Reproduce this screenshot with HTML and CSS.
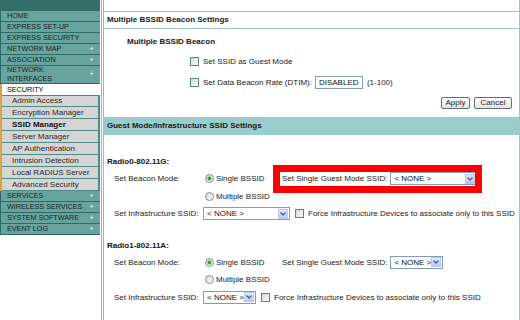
FILE: index.html
```html
<!DOCTYPE html>
<html>
    <head>
        <meta charset="utf-8">
        <title>SSID Manager</title>
        <link rel="stylesheet" href="styles.css">
    </head>
    <body>
        <div class="page">
            <nav class="menu">
                <div class="menu__top"></div>
                <div class="menu__item">HOME</div>
                <div class="menu__item">EXPRESS SET-UP</div>
                <div class="menu__item">EXPRESS SECURITY</div>
                <div class="menu__item">NETWORK MAP <span class="menu__plus">+</span></div>
                <div class="menu__item">ASSOCIATION <span class="menu__plus">+</span></div>
                <div class="menu__item menu__item--tall"><span>NETWORK<br>INTERFACES</span> <span class="menu__plus">+</span></div>
                <div class="menu__item menu__item--current">SECURITY</div>
                <ul class="submenu">
                    <li>Admin Access</li>
                    <li>Encryption Manager</li>
                    <li class="submenu__active">SSID Manager</li>
                    <li>Server Manager</li>
                    <li>AP Authentication</li>
                    <li>Intrusion Detection</li>
                    <li>Local RADIUS Server</li>
                    <li>Advanced Security</li>
                </ul>
                <div class="menu__item">SERVICES <span class="menu__plus">+</span></div>
                <div class="menu__item">WIRELESS SERVICES <span class="menu__plus">+</span></div>
                <div class="menu__item">SYSTEM SOFTWARE <span class="menu__plus">+</span></div>
                <div class="menu__item">EVENT LOG <span class="menu__plus">+</span></div>
            </nav>

            <main class="content">
                <h3 class="title">Multiple BSSID Beacon Settings</h3>
                <div class="beacon">
                    <h4 class="beacon__name">Multiple BSSID Beacon</h4>
                    <label class="beacon__row"><input type="checkbox" class="check"> Set SSID as Guest Mode</label>
                    <label class="beacon__row"><input type="checkbox" class="check"> Set Data Beacon Rate (DTIM): <span class="textbox">DISABLED</span> (1-100)</label>
                    <div class="actions">
                        <button class="btn btn--apply">Apply</button>
                        <button class="btn btn--cancel">Cancel</button>
                    </div>
                </div>

                <h3 class="band">Guest Mode/Infrastructure SSID Settings</h3>

                <section class="radio">
                    <h4 class="radio__name">Radio0-802.11G:</h4>
                    <div class="radio__grid">
                        <span class="lbl">Set Beacon Mode:</span>
                        <label class="opt"><input type="radio" name="r0" class="dot" checked>Single BSSID</label>
                        <div class="guest">
                            Set Single Guest Mode SSID:
                            <div class="select select--wide"><span class="select__value">&lt; NONE &gt;</span><span class="select__arrow"><svg width="6" height="4" viewBox="0 0 6 4"><polyline points="0.5,0.5 3,3 5.5,0.5" fill="none" stroke="#4d6185" stroke-width="1.3"/></svg></span></div>
                            <span class="guest__mark"></span>
                        </div>
                        <label class="opt opt--row2"><input type="radio" name="r0" class="dot">Multiple BSSID</label>
                        <span class="lbl">Set Infrastructure SSID:</span>
                        <div class="infra">
                            <div class="select select--wide"><span class="select__value">&lt; NONE &gt;</span><span class="select__arrow"><svg width="6" height="4" viewBox="0 0 6 4"><polyline points="0.5,0.5 3,3 5.5,0.5" fill="none" stroke="#4d6185" stroke-width="1.3"/></svg></span></div>
                            <input type="checkbox" class="check">
                            <span>Force Infrastructure Devices to associate only to this SSID</span>
                        </div>
                    </div>
                </section>

                <section class="radio radio--next">
                    <h4 class="radio__name">Radio1-802.11A:</h4>
                    <div class="radio__grid">
                        <span class="lbl">Set Beacon Mode:</span>
                        <label class="opt"><input type="radio" name="r1" class="dot" checked>Single BSSID</label>
                        <div class="guest">
                            Set Single Guest Mode SSID:
                            <div class="select select--narrow"><span class="select__value">&lt; NONE &gt;</span><span class="select__arrow"><svg width="6" height="4" viewBox="0 0 6 4"><polyline points="0.5,0.5 3,3 5.5,0.5" fill="none" stroke="#4d6185" stroke-width="1.3"/></svg></span></div>
                        </div>
                        <label class="opt opt--row2"><input type="radio" name="r1" class="dot">Multiple BSSID</label>
                        <span class="lbl">Set Infrastructure SSID:</span>
                        <div class="infra">
                            <div class="select select--narrow"><span class="select__value">&lt; NONE &gt;</span><span class="select__arrow"><svg width="6" height="4" viewBox="0 0 6 4"><polyline points="0.5,0.5 3,3 5.5,0.5" fill="none" stroke="#4d6185" stroke-width="1.3"/></svg></span></div>
                            <input type="checkbox" class="check">
                            <span>Force Infrastructure Devices to associate only to this SSID</span>
                        </div>
                    </div>
                </section>
            </main>
        </div>
    </body>
</html>
```

FILE: styles.css
```css
:root {
    --font-main: 'Liberation Sans', Arial, Helvetica, sans-serif;

    --color-menu: #68a39e;
    --color-menu-dark: #2f6b66;
    --color-sub: #d5d5d5;
    --color-sub-line: #4f8b86;
    --color-accent: #d9a441;
    --color-line: #9bc8c8;
    --color-band: #99cccc;
    --color-field: #7f9db9;
    --color-mark: #ff0000;
}
* {
    box-sizing: border-box;
}
body {
    margin: 0;
    font-family: var(--font-main);
    font-size: 8px;
    color: #222;
    background: #fff;
}
h3, h4 {
    margin: 0;
    font-size: 8px;
}
.page {
    display: flex;
    width: 520px;
    height: 320px;
}

/* left menu */
.menu {
    width: 100px;
    flex: none;
}
.menu__top {
    height: 11px;
    background: #336f6a;
}
.menu__item {
    display: flex;
    justify-content: space-between;
    align-items: center;
    height: 11px;
    padding: 0 6px 0 6px;
    background: var(--color-menu);
    border-bottom: 1px solid var(--color-menu-dark);
    border-left: 1px solid var(--color-menu-dark);
    font-size: 7.2px;
    line-height: 10px;
    color: #132826;
}
.menu__item--tall {
    height: 18px;
    line-height: 8.5px;
}
.menu__item--current {
    background: #fff;
    color: #000;
    border-left: 2px solid var(--color-accent);
    padding-left: 5px;
    border-bottom: 0;
}
.menu__plus {
    color: #e3f1ef;
    font-size: 8px;
}
.submenu {
    list-style: none;
    margin: 0;
    padding: 0;
    background: var(--color-sub);
    border-left: 2px solid var(--color-accent);
    border-right: 2px solid var(--color-sub-line);
}
.submenu li {
    height: 12px;
    line-height: 11px;
    padding-left: 10px;
    border-bottom: 1px solid var(--color-sub-line);
    color: #2a2a2a;
}
.submenu li:first-child {
    border-top: 1px solid var(--color-sub-line);
    line-height: 10px;
}
.submenu .submenu__active {
    font-weight: bold;
    color: #111;
}

/* main content */
.content {
    flex: 1;
    margin-left: 1px;
    padding-top: 11px;
    border-left: 3px double #8dbdbd;
    border-right: 1px solid var(--color-line);
}
.title {
    height: 18px;
    line-height: 16px;
    padding-left: 3px;
    border-top: 1px solid var(--color-line);
    border-bottom: 1px solid var(--color-line);
    color: #1a1a1a;
}
.beacon {
    padding: 6px 7px 0 23px;
}
.beacon__name {
    line-height: 14px;
    color: #1a1a1a;
}
.beacon__row {
    display: flex;
    align-items: center;
    gap: 4px;
    height: 21px;
    margin-left: 63px;
}
.beacon__row:first-of-type {
    margin-top: 2px;
}
.textbox {
    display: inline-flex;
    align-items: center;
    width: 48px;
    height: 13px;
    padding-left: 3px;
    margin-left: -1px;
    border: 1px solid var(--color-field);
    color: #111;
}
.actions {
    display: flex;
    justify-content: flex-end;
    gap: 4px;
    margin-top: 4px;
}
.btn {
    height: 12px;
    padding: 0;
    font-family: var(--font-main);
    font-size: 8px;
    line-height: 10px;
    color: #222;
    border: 1px solid #5d6f80;
    border-radius: 2px;
    background: linear-gradient(#ffffff, #e4e4de);
}
.btn--apply {
    width: 29px;
}
.btn--cancel {
    width: 38px;
}
.band {
    margin-top: 8px;
    height: 18px;
    line-height: 18px;
    padding-left: 3px;
    background: var(--color-band);
    color: #1a1a1a;
}

/* radio sections */
.radio {
    padding: 18px 0 0 3px;
}
.radio--next {
    padding-top: 14px;
}
.radio__name {
    line-height: 17px;
    color: #111;
}
.radio__grid {
    display: grid;
    grid-template-columns: 89px 79px auto;
    grid-auto-rows: 17.5px;
    align-items: center;
    margin-left: 7px;
}
.radio__grid .lbl {
    grid-column: 1;
}
.opt {
    display: flex;
    align-items: center;
    gap: 2px;
    padding-left: 2px;
}
.opt--row2 {
    grid-column: 2;
}
.guest {
    position: relative;
    display: flex;
    align-items: center;
    gap: 3px;
}
.guest__mark {
    position: absolute;
    left: -9px;
    top: -7px;
    width: 209px;
    height: 28px;
    border: 7px solid var(--color-mark);
}
.infra {
    grid-column: 2 / span 2;
    display: flex;
    align-items: center;
    gap: 4px;
}
.infra .select {
    margin-right: 1px;
}

/* form widgets */
.check,
.dot {
    -webkit-appearance: none;
    appearance: none;
    flex: none;
    width: 9px;
    height: 9px;
    margin: 0;
    border: 1px solid #5f7f9f;
    background: linear-gradient(135deg, #d8d8d2, #fbfbf9);
}
.dot {
    border-radius: 50%;
    border-color: #7890ab;
}
.dot:checked {
    background: radial-gradient(circle, #36a936 0 1.7px, transparent 2.4px), linear-gradient(135deg, #d8d8d2, #fbfbf9);
}
.select {
    display: flex;
    align-items: center;
    flex: none;
    height: 13px;
    padding: 0 1px 0 3px;
    border: 1px solid var(--color-field);
    background: #fff;
    color: #111;
}
.select--wide {
    width: 87px;
}
.select--narrow {
    width: 53px;
}
.select__value {
    flex: 1;
    white-space: nowrap;
}
.select__arrow {
    display: flex;
    align-items: center;
    justify-content: center;
    width: 10px;
    height: 10px;
    border: 1px solid #b7c8ef;
    background: linear-gradient(#e2e9fd, #b9c9f3);
}
```
